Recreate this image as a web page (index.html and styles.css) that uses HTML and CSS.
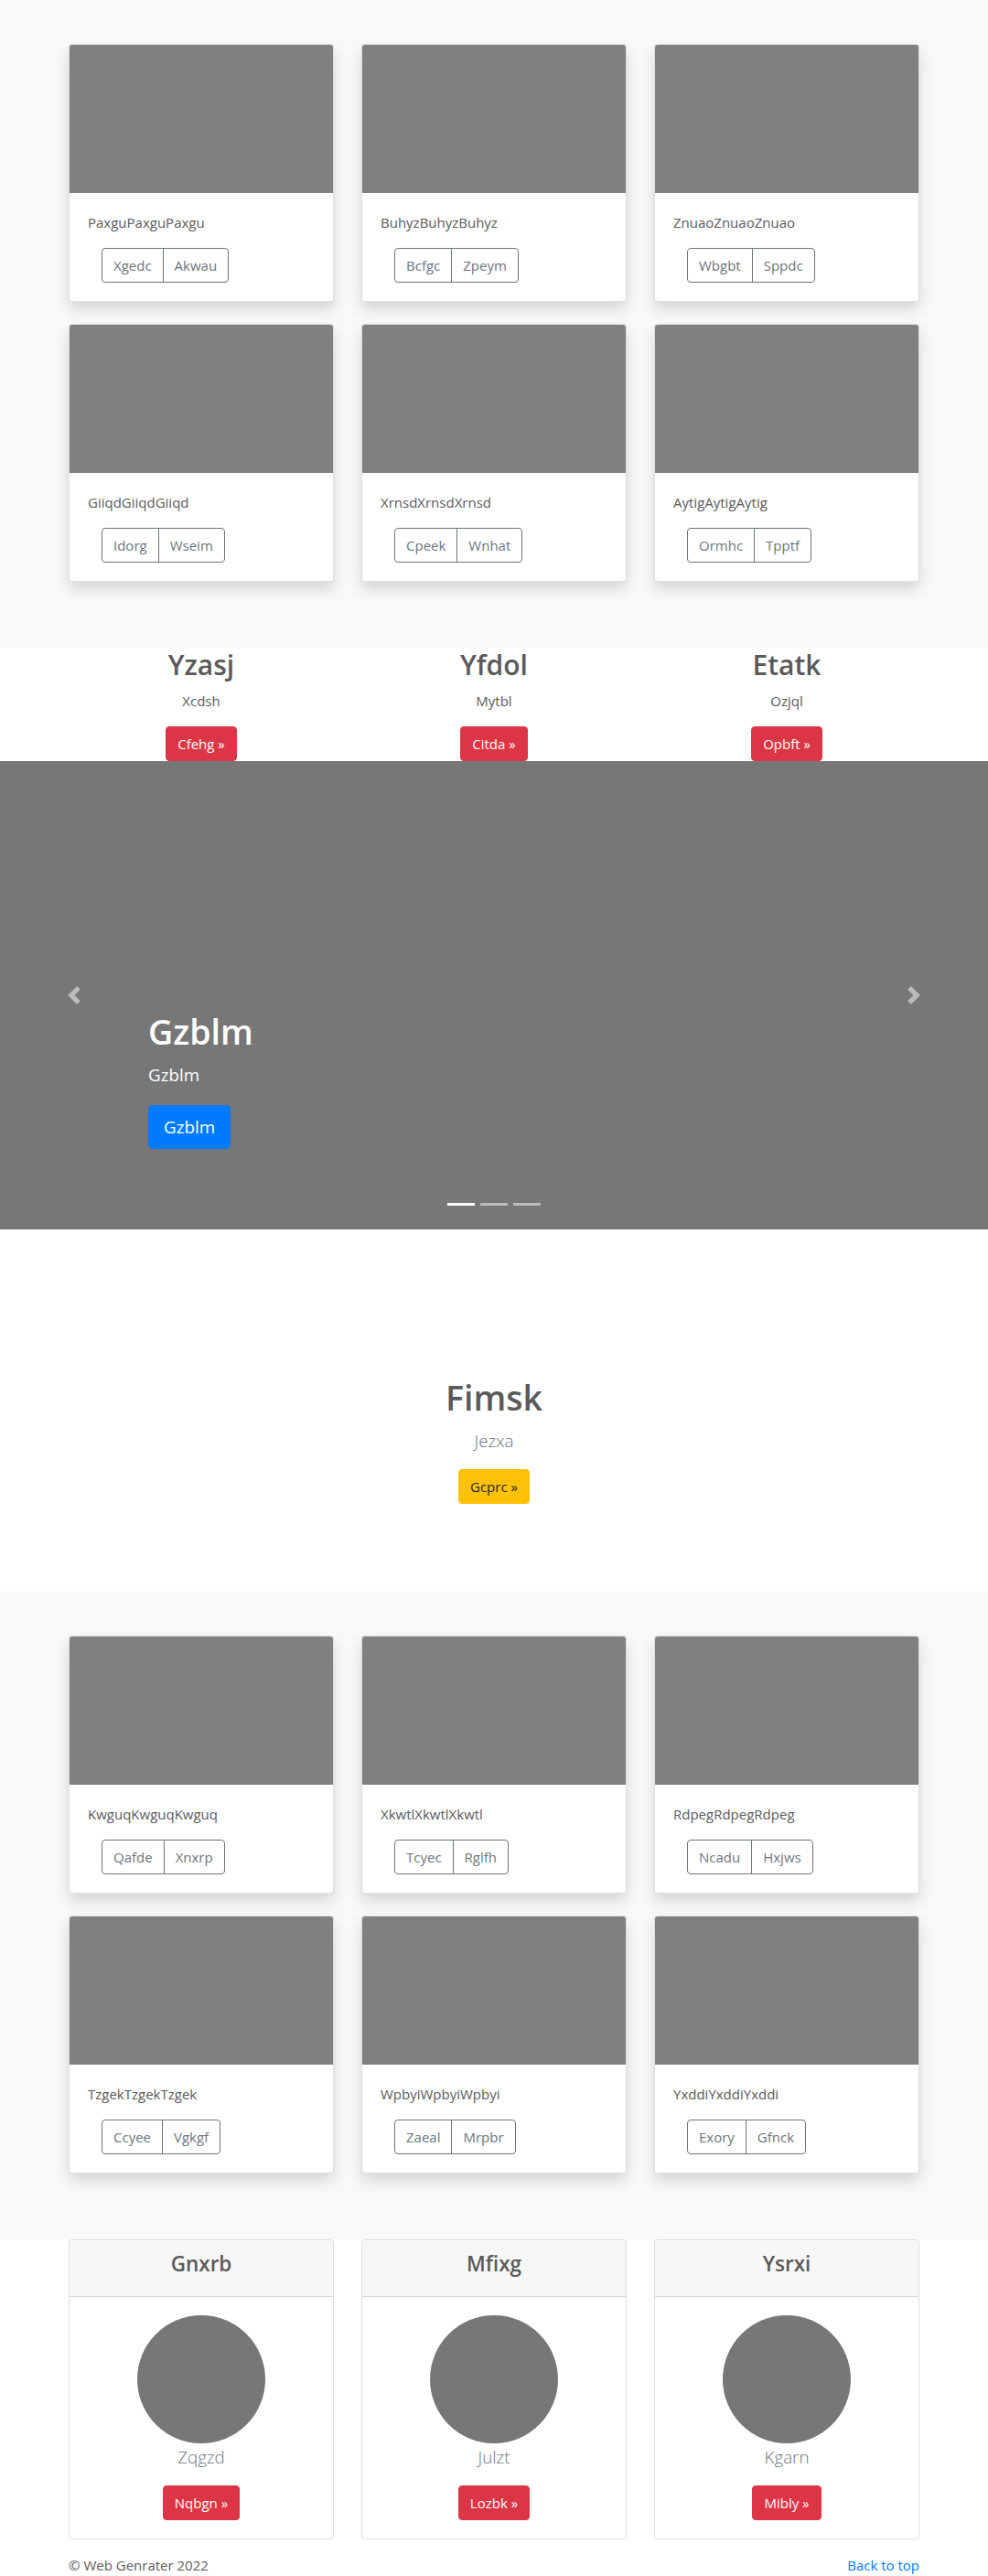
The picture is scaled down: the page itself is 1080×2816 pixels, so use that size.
FILE: index.html
```html
<!DOCTYPE html>
<html lang="en">
<head>
<meta charset="utf-8">
<title>Album</title>
<link rel="stylesheet" href="styles.css">
</head>
<body>
<main>
  <section class="album bg-light">
    <div class="container">
      <div class="grid">
        <div class="card">
          <div class="card-img"></div>
          <div class="card-body">
            <p class="card-text">PaxguPaxguPaxgu</p>
            <div class="btn-group"><a class="btn btn-outline" href="#">Xgedc</a><a class="btn btn-outline" href="#">Akwau</a></div>
          </div>
        </div>
        <div class="card">
          <div class="card-img"></div>
          <div class="card-body">
            <p class="card-text">BuhyzBuhyzBuhyz</p>
            <div class="btn-group"><a class="btn btn-outline" href="#">Bcfgc</a><a class="btn btn-outline" href="#">Zpeym</a></div>
          </div>
        </div>
        <div class="card">
          <div class="card-img"></div>
          <div class="card-body">
            <p class="card-text">ZnuaoZnuaoZnuao</p>
            <div class="btn-group"><a class="btn btn-outline" href="#">Wbgbt</a><a class="btn btn-outline" href="#">Sppdc</a></div>
          </div>
        </div>
        <div class="card">
          <div class="card-img"></div>
          <div class="card-body">
            <p class="card-text">GiiqdGiiqdGiiqd</p>
            <div class="btn-group"><a class="btn btn-outline" href="#">Idorg</a><a class="btn btn-outline" href="#">Wseim</a></div>
          </div>
        </div>
        <div class="card">
          <div class="card-img"></div>
          <div class="card-body">
            <p class="card-text">XrnsdXrnsdXrnsd</p>
            <div class="btn-group"><a class="btn btn-outline" href="#">Cpeek</a><a class="btn btn-outline" href="#">Wnhat</a></div>
          </div>
        </div>
        <div class="card">
          <div class="card-img"></div>
          <div class="card-body">
            <p class="card-text">AytigAytigAytig</p>
            <div class="btn-group"><a class="btn btn-outline" href="#">Ormhc</a><a class="btn btn-outline" href="#">Tpptf</a></div>
          </div>
        </div>
      </div>
    </div>
  </section>

  <section class="marketing">
    <div class="container">
      <div class="grid">
        <div class="col">
          <h2>Yzasj</h2>
          <p>Xcdsh</p>
          <div class="btn-wrap"><a class="btn btn-danger" href="#">Cfehg &raquo;</a></div>
        </div>
        <div class="col">
          <h2>Yfdol</h2>
          <p>Mytbl</p>
          <div class="btn-wrap"><a class="btn btn-danger" href="#">Citda &raquo;</a></div>
        </div>
        <div class="col">
          <h2>Etatk</h2>
          <p>Ozjql</p>
          <div class="btn-wrap"><a class="btn btn-danger" href="#">Opbft &raquo;</a></div>
        </div>
      </div>
    </div>
  </section>

  <section class="carousel">
    <a class="carousel-control prev" href="#">
      <svg width="20" height="20" viewBox="0 0 8 8" fill="#fff"><path d="M5.25 0l-4 4 4 4 1.5-1.5L4.25 4l2.5-2.5L5.25 0z"/></svg>
    </a>
    <div class="carousel-caption">
      <h1>Gzblm</h1>
      <p class="caption-text">Gzblm</p>
      <div class="btn-wrap"><a class="btn btn-lg btn-primary" href="#">Gzblm</a></div>
    </div>
    <a class="carousel-control next" href="#">
      <svg width="20" height="20" viewBox="0 0 8 8" fill="#fff"><path d="M2.75 0l-1.5 1.5L3.75 4l-2.5 2.5L2.75 8l4-4-4-4z"/></svg>
    </a>
    <ol class="carousel-indicators">
      <li class="active"></li>
      <li></li>
      <li></li>
    </ol>
  </section>

  <section class="jumbotron">
    <div class="container">
      <h1>Fimsk</h1>
      <p class="lead muted">Jezxa</p>
      <div class="btn-wrap"><a class="btn btn-warning" href="#">Gcprc &raquo;</a></div>
    </div>
  </section>

  <section class="album bg-light">
    <div class="container">
      <div class="grid">
        <div class="card">
          <div class="card-img"></div>
          <div class="card-body">
            <p class="card-text">KwguqKwguqKwguq</p>
            <div class="btn-group"><a class="btn btn-outline" href="#">Qafde</a><a class="btn btn-outline" href="#">Xnxrp</a></div>
          </div>
        </div>
        <div class="card">
          <div class="card-img"></div>
          <div class="card-body">
            <p class="card-text">XkwtlXkwtlXkwtl</p>
            <div class="btn-group"><a class="btn btn-outline" href="#">Tcyec</a><a class="btn btn-outline" href="#">Rglfh</a></div>
          </div>
        </div>
        <div class="card">
          <div class="card-img"></div>
          <div class="card-body">
            <p class="card-text">RdpegRdpegRdpeg</p>
            <div class="btn-group"><a class="btn btn-outline" href="#">Ncadu</a><a class="btn btn-outline" href="#">Hxjws</a></div>
          </div>
        </div>
        <div class="card">
          <div class="card-img"></div>
          <div class="card-body">
            <p class="card-text">TzgekTzgekTzgek</p>
            <div class="btn-group"><a class="btn btn-outline" href="#">Ccyee</a><a class="btn btn-outline" href="#">Vgkgf</a></div>
          </div>
        </div>
        <div class="card">
          <div class="card-img"></div>
          <div class="card-body">
            <p class="card-text">WpbyiWpbyiWpbyi</p>
            <div class="btn-group"><a class="btn btn-outline" href="#">Zaeal</a><a class="btn btn-outline" href="#">Mrpbr</a></div>
          </div>
        </div>
        <div class="card">
          <div class="card-img"></div>
          <div class="card-body">
            <p class="card-text">YxddiYxddiYxddi</p>
            <div class="btn-group"><a class="btn btn-outline" href="#">Exory</a><a class="btn btn-outline" href="#">Gfnck</a></div>
          </div>
        </div>
      </div>
    </div>
  </section>

  <section class="pricing">
    <div class="container">
      <div class="grid">
        <div class="pcard">
          <div class="pcard-header"><h4>Gnxrb</h4></div>
          <div class="pcard-body">
            <div class="circle"></div>
            <p class="lead muted">Zqgzd</p>
            <div class="btn-wrap"><a class="btn btn-danger" href="#">Nqbgn &raquo;</a></div>
          </div>
        </div>
        <div class="pcard">
          <div class="pcard-header"><h4>Mfixg</h4></div>
          <div class="pcard-body">
            <div class="circle"></div>
            <p class="lead muted">Julzt</p>
            <div class="btn-wrap"><a class="btn btn-danger" href="#">Lozbk &raquo;</a></div>
          </div>
        </div>
        <div class="pcard">
          <div class="pcard-header"><h4>Ysrxi</h4></div>
          <div class="pcard-body">
            <div class="circle"></div>
            <p class="lead muted">Kgarn</p>
            <div class="btn-wrap"><a class="btn btn-danger" href="#">Mibly &raquo;</a></div>
          </div>
        </div>
      </div>
    </div>
  </section>
</main>

<footer class="footer container">
  <p>&copy; Web Genrater 2022</p>
  <p><a class="link" href="#">Back to top</a></p>
</footer>
</body>
</html>
```

FILE: styles.css
```css
* {
  box-sizing: border-box;
}

html,
body {
  margin: 0;
  padding: 0;
}

body {
  font-family: "Open Sans", "Noto Sans", "Liberation Sans", Arial, sans-serif;
  font-size: 15px;
  line-height: 24px;
  color: #5a5a5a;
  background: #fff;
}

p {
  margin: 0 0 16px;
}

h1,
h2,
h4 {
  margin: 0 0 8px;
  font-weight: 600;
}

h1 {
  font-size: 37.5px;
  line-height: 48px;
}

h2 {
  font-size: 30px;
  line-height: 38.4px;
}

h4 {
  font-size: 22.5px;
  line-height: 28.8px;
}

.container {
  width: 960px;
  margin: 0 auto;
  padding: 0 15px;
}

.grid {
  display: grid;
  grid-template-columns: repeat(3, 290px);
  column-gap: 30px;
  row-gap: 24px;
}

.bg-light {
  background: #f8f9fa;
}

/* Album */
.album {
  padding: 48px 0 72px;
}

.card {
  background: #fff;
  border: 1px solid rgba(0, 0, 0, 0.125);
  border-radius: 4px;
  box-shadow: 0 8px 16px rgba(0, 0, 0, 0.15);
  overflow: hidden;
}

.card-img {
  height: 162px;
  background: #808080;
}

.card-body {
  padding: 20px;
}

.card-text {
  margin-bottom: 16px;
}

.btn-group {
  display: flex;
  margin-left: 15px;
}

/* Buttons */
.btn {
  display: inline-block;
  font-size: 15px;
  line-height: 24px;
  padding: 6px 12px;
  border: 1px solid transparent;
  border-radius: 4px;
  text-decoration: none;
  text-align: center;
  white-space: nowrap;
}

.btn-outline {
  color: #6c757d;
  border-color: #6c757d;
  background: transparent;
}

.btn-group .btn:first-child {
  border-top-right-radius: 0;
  border-bottom-right-radius: 0;
}

.btn-group .btn:last-child {
  margin-left: -1px;
  border-top-left-radius: 0;
  border-bottom-left-radius: 0;
}

.btn-danger {
  color: #fff;
  background: #dc3545;
  border-color: #dc3545;
}

.btn-warning {
  color: #212529;
  background: #ffc107;
  border-color: #ffc107;
}

.btn-primary {
  color: #fff;
  background: #007bff;
  border-color: #007bff;
}

.btn-lg {
  font-size: 18.75px;
  line-height: 30px;
  padding: 8px 16px;
  border-radius: 4.8px;
}

.btn-wrap {
  display: flex;
}

/* Marketing */
.marketing .col {
  text-align: center;
}

.marketing .btn-wrap,
.jumbotron .btn-wrap,
.pcard-body .btn-wrap {
  justify-content: center;
}

/* Carousel */
.carousel {
  position: relative;
  height: 512px;
  background: #777;
  overflow: hidden;
}

.carousel-control {
  position: absolute;
  top: 0;
  bottom: 0;
  width: 15%;
  display: flex;
  align-items: center;
  justify-content: center;
  opacity: 0.5;
}

.carousel-control svg {
  display: block;
}

.carousel-control.prev {
  left: 0;
}

.carousel-control.next {
  right: 0;
}

.carousel-caption {
  position: absolute;
  left: 15%;
  right: 15%;
  bottom: 88px;
  color: #fff;
  text-align: left;
}

.caption-text {
  font-size: 18.75px;
  line-height: 30px;
  margin-bottom: 18px;
}

.carousel-indicators {
  position: absolute;
  left: 0;
  right: 0;
  bottom: 0;
  margin: 0 0 16px;
  padding: 0;
  list-style: none;
  display: flex;
  justify-content: center;
}

.carousel-indicators li {
  width: 30px;
  height: 3px;
  margin: 0 3px;
  box-sizing: content-box;
  border-top: 10px solid transparent;
  border-bottom: 10px solid transparent;
  background-color: #fff;
  background-clip: padding-box;
  opacity: 0.5;
}

.carousel-indicators li.active {
  opacity: 1;
}

/* Jumbotron */
.jumbotron {
  padding: 160px 0 96px;
  text-align: center;
}

.lead {
  font-size: 18.75px;
  line-height: 30px;
  font-weight: 300;
}

.muted {
  color: #6c757d;
}

/* Pricing cards */
.pcard {
  border: 1px solid rgba(0, 0, 0, 0.125);
  border-radius: 4px;
  overflow: hidden;
  background: #fff;
}

.pcard-header {
  padding: 12px 20px;
  background: rgba(0, 0, 0, 0.03);
  border-bottom: 1px solid rgba(0, 0, 0, 0.125);
  text-align: center;
}

.pcard-body {
  padding: 20px;
  text-align: center;
}

.circle {
  width: 140px;
  height: 140px;
  margin: 0 auto;
  border-radius: 50%;
  background: #777;
}

/* Footer */
.footer {
  display: flex;
  justify-content: space-between;
  margin-top: 16px;
}

.footer p {
  margin: 0 0 16px;
}

.link {
  color: #007bff;
  text-decoration: none;
}
```
